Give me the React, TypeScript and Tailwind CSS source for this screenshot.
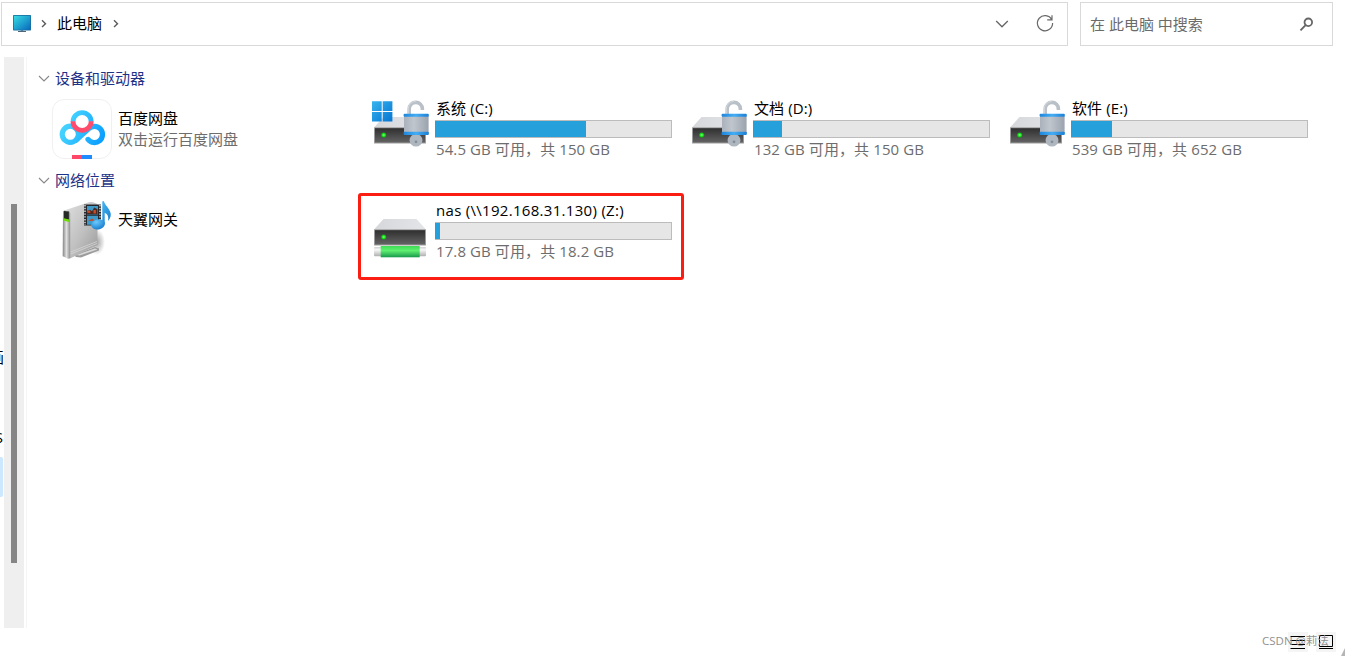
import type { ReactNode } from 'react'

type Drive = {
  name: string
  detail: string
  used: number
  icon: ReactNode
  nameClass?: string
}

function DriveBox() {
  return (
    <>
      <defs>
        <linearGradient id="driveFront" x1="0" y1="0" x2="0" y2="1">
          <stop offset="0" stopColor="#2f2f2f" />
          <stop offset="1" stopColor="#636363" />
        </linearGradient>
        <linearGradient id="driveTop" x1="0" y1="0" x2="1" y2="0">
          <stop offset="0" stopColor="#d6d7da" />
          <stop offset="1" stopColor="#e4e5e9" />
        </linearGradient>
        <radialGradient id="led">
          <stop offset="0" stopColor="#8dff8d" />
          <stop offset="0.6" stopColor="#18e018" />
          <stop offset="1" stopColor="#0fa015" />
        </radialGradient>
      </defs>
      <path d="M13.5 19h33L56 29.5H4z" fill="url(#driveTop)" />
      <rect x="4" y="29.3" width="52" height="16.2" rx="0.6" fill="#9b9b9b" />
      <rect x="5" y="30.2" width="50" height="14.3" fill="url(#driveFront)" />
      <circle cx="13.7" cy="37" r="2.6" fill="url(#led)" />
    </>
  )
}

function Padlock() {
  return (
    <>
      <defs>
        <linearGradient id="lockBody" x1="0" y1="0" x2="1" y2="0">
          <stop offset="0" stopColor="#aab1bb" />
          <stop offset="0.4" stopColor="#c0c6cd" />
          <stop offset="1" stopColor="#9aa3ae" />
        </linearGradient>
        <linearGradient id="lockBand" x1="0" y1="0" x2="1" y2="0">
          <stop offset="0" stopColor="#1c86dd" />
          <stop offset="0.5" stopColor="#45adf3" />
          <stop offset="1" stopColor="#1c7fd6" />
        </linearGradient>
      </defs>
      <path d="M39.2 17V11a6.6 6.6 0 0 1 13.2 0v1" fill="none" stroke="#b9c0c8" strokeWidth="3.6" />
      <path d="M38.2 16V11a7.6 7.6 0 0 1 7.6-7.6" fill="none" stroke="#d5d9de" strokeWidth="1" />
      <circle cx="46" cy="42.2" r="6.4" fill="#aeb6bf" />
      <rect x="34" y="18" width="24.6" height="17.5" fill="url(#lockBody)" />
      <rect x="33.6" y="15.8" width="25.2" height="3" rx="1" fill="url(#lockBand)" />
      <rect x="33.6" y="33.8" width="25.2" height="3.2" rx="1" fill="url(#lockBand)" />
      <circle cx="46" cy="43.8" r="1.4" fill="#858e98" />
    </>
  )
}

function LocalDriveIcon({ system = false }: { system?: boolean }) {
  return (
    <svg className="size-[60px] shrink-0" viewBox="0 0 60 60">
      <DriveBox />
      {system && (
        <>
          <defs>
            <linearGradient id="winLogo" x1="0" y1="0" x2="1" y2="1">
              <stop offset="0" stopColor="#35b4ee" />
              <stop offset="1" stopColor="#0675d3" />
            </linearGradient>
          </defs>
          <path d="M2 3.3h9.7V13H2zm10.7 0h9.7V13h-9.7zM2 14h9.7v9.6H2zm10.7 0h9.7v9.6h-9.7z" fill="url(#winLogo)" />
        </>
      )}
      <Padlock />
    </svg>
  )
}

function NetworkDriveIcon() {
  return (
    <svg className="size-[60px] shrink-0" viewBox="0 0 60 60">
      <defs>
        <linearGradient id="pipe" x1="0" y1="0" x2="0" y2="1">
          <stop offset="0" stopColor="#cfcfcf" />
          <stop offset="0.3" stopColor="#f8f8f8" />
          <stop offset="1" stopColor="#aeaeae" />
        </linearGradient>
        <linearGradient id="pipeGreen" x1="0" y1="0" x2="0" y2="1">
          <stop offset="0" stopColor="#3fdc55" />
          <stop offset="0.4" stopColor="#5ff071" />
          <stop offset="1" stopColor="#17984a" />
        </linearGradient>
      </defs>
      <DriveBox />
      <rect x="4" y="47" width="52" height="9.3" rx="1" fill="url(#pipe)" />
      <rect x="10.7" y="46" width="39" height="11.3" fill="url(#pipeGreen)" />
    </svg>
  )
}

function NetdiskIcon() {
  return (
    <svg className="size-[60px] shrink-0" viewBox="0 0 60 60" fill="none">
      <defs>
        <linearGradient id="cloud" gradientUnits="userSpaceOnUse" x1="8" y1="20" x2="53" y2="42">
          <stop offset="0" stopColor="#4ddcff" />
          <stop offset="0.5" stopColor="#2dbcff" />
          <stop offset="1" stopColor="#069bff" />
        </linearGradient>
      </defs>
      <rect x="0.5" y="0.5" width="59" height="59" rx="11.5" fill="#fff" stroke="#f0f0f0" />
      <circle cx="18.3" cy="35.3" r="8.1" stroke="url(#cloud)" strokeWidth="5.2" />
      <path d="M24 41.2 36.8 29.6A8.1 8.1 0 1 1 36 40.4" stroke="url(#cloud)" strokeWidth="5.2" strokeLinecap="round" />
      <path d="M21 22.7a9.1 9.1 0 0 1 18.2 0" stroke="url(#cloud)" strokeWidth="4.8" />
      <path d="M21 22.2a9.1 9.1 0 0 0 18.2 0" stroke="#ff4c6c" strokeWidth="4.8" />
      <path d="M20 56h10v4H20z" fill="#ff4769" />
      <path d="M30 56h10v4H30z" fill="#1e8bff" />
    </svg>
  )
}

function MediaServerIcon() {
  return (
    <svg className="h-[64px] w-[60px] shrink-0" viewBox="0 0 60 64">
      <defs>
        <linearGradient id="server" x1="0" y1="0" x2="1" y2="1">
          <stop offset="0" stopColor="#e0e0e0" />
          <stop offset="0.55" stopColor="#c0c0c0" />
          <stop offset="1" stopColor="#989898" />
        </linearGradient>
        <linearGradient id="serverSide" x1="0" y1="0" x2="1" y2="0">
          <stop offset="0" stopColor="#858585" />
          <stop offset="0.5" stopColor="#e0e0e0" />
          <stop offset="1" stopColor="#8f8f8f" />
        </linearGradient>
        <linearGradient id="note" x1="0" y1="0" x2="0.6" y2="1">
          <stop offset="0" stopColor="#45b5f0" />
          <stop offset="1" stopColor="#1b86d4" />
        </linearGradient>
        <radialGradient id="noteHead" cx="0.4" cy="0.25" r="0.8">
          <stop offset="0" stopColor="#6cc9fa" />
          <stop offset="1" stopColor="#1279cc" />
        </radialGradient>
        <radialGradient id="serverShadow">
          <stop offset="0" stopColor="#000" stopOpacity="0.35" />
          <stop offset="1" stopColor="#000" stopOpacity="0" />
        </radialGradient>
      </defs>
      <ellipse cx="41" cy="44" rx="8" ry="13" fill="url(#serverShadow)" />
      <path d="M18 57 39 49l4 1.500v2L25 59.500l-5-.5z" fill="#9c9c9c" />
      <path d="m20 57 19-6.500 2.500 1-18 6z" fill="#d8d8d8" />
      <path d="M8 12.600 33 4.300q2-.6 4 0l4.500 1.700V47L14 60.600z" fill="url(#server)" />
      <path d="M14.500 54 41 43.500M14.500 56 41 45.500" stroke="#dadada" strokeWidth="0.7" />
      <path d="m7 13.500 1.200-1 5 .6 1 2.400v44q-.3 1.600-2 1.200L6.700 58.300z" fill="url(#serverSide)" />
      <path d="m8 13 4.900.6v8.500L8 21z" fill="#252a27" />
      <path d="m8 20.200 5 1.200V24L8 22.700z" fill="#70dd0b" />
      <path d="M28 6.500h17v21H28z" fill="#26282c" />
      <path d="M29 7v20M44 7v20" stroke="#e2e6e8" strokeWidth="1.400" strokeDasharray="1.400 1.400" />
      <path d="M31 8h11v8.500H31zM31 17.800h11v9H31z" fill="#3d9ac9" />
      <path d="m31 13 3-1.200 2 1.400 2.200-3.600 3.300 1.600v5H31z" fill="#492b24" />
      <path d="m31 13.200 2.500-1 1.500 2.400-3.500.5zM37.500 12h2.400v3.400h-2.400zM32 23l4-2.500 3 2.200z" fill="#c94c29" />
      <path
        d="M46.300 3.500q1.300-1 1.800.3c.9 3.200 4.300 5.500 6.100 10 1.200 3 .7 6.200-2.200 9.200.9-4.100-.2-7-3.300-8.300V26h-2.400z"
        fill="url(#note)"
      />
      <ellipse cx="42" cy="26.400" rx="7" ry="5.100" transform="rotate(-10 42 26.400)" fill="url(#noteHead)" />
    </svg>
  )
}

function MonitorIcon() {
  return (
    <svg className="h-[18px] w-5" viewBox="0 0 20 18">
      <defs>
        <linearGradient id="screen" x1="0" y1="0" x2="1" y2="1">
          <stop offset="0" stopColor="#37dce3" />
          <stop offset="1" stopColor="#0869bd" />
        </linearGradient>
      </defs>
      <path d="M8.700 15h2.600v1.500H8.700z" fill="#8a98a3" />
      <path d="M6 16h8v1H6z" fill="#4e6679" />
      <rect x="1" y="0" width="18" height="15.500" rx="0.7" fill="#176e9e" />
      <rect x="1.800" y="0.800" width="16.400" height="13.900" fill="url(#screen)" />
    </svg>
  )
}

function Crumb() {
  return (
    <svg className="h-3 w-2" viewBox="0 0 8 12" fill="none" stroke="#5c5c5c" strokeWidth="1.400">
      <path d="M2 2.300 5.500 5.700 2 9.100" />
    </svg>
  )
}

function AddressBar() {
  return (
    <div className="flex gap-3 pt-0.5 pl-px">
      <div className="flex h-11 w-[1067px] items-center border border-[#d9d9d9] pl-[10px]">
        <MonitorIcon />
        <span className="ml-[8px] flex">
          <Crumb />
        </span>
        <span className="-mt-[3px] ml-[9px] w-[45px] text-black">此电脑</span>
        <span className="ml-[10px] flex">
          <Crumb />
        </span>
        <svg className="-mt-px ml-[874px] h-4 w-4" viewBox="0 0 16 16" fill="none" stroke="#666" strokeWidth="1.300">
          <path d="m2.200 5 5.800 5.800L13.800 5" />
        </svg>
        <svg className="-mt-0.5 ml-[25px] h-5 w-5" viewBox="0 0 20 20" fill="none" stroke="#6a6a6a" strokeWidth="1.200">
          <path d="M16.700 6.600A7.600 7.600 0 1 0 17.600 10M17 2.200v4.600h-4.800" />
        </svg>
      </div>
      <div className="flex h-11 w-[253px] items-center border border-[#d9d9d9] pl-[9px]">
        <span className="w-[120px] whitespace-nowrap text-[#6b6b6b]">在 此电脑 中搜索</span>
        <svg className="ml-[89px] h-4 w-4" viewBox="0 0 16 16" fill="none" stroke="#666">
          <circle cx="9.300" cy="6.300" r="3.800" strokeWidth="1.800" />
          <path d="M6.600 9.200 1.500 14.400" strokeWidth="1.900" />
        </svg>
      </div>
    </div>
  )
}

// What is left visible of the navigation pane
function NavPane() {
  return (
    <>
      <div className="relative w-1 shrink-0 overflow-hidden">
        <span className="absolute top-[290px] right-0 text-black">画</span>
        <span className="absolute top-[370px] right-px text-black">S</span>
        <div className="absolute top-[400px] left-0 h-10 w-[3px] rounded-r-xs bg-[#cce8ff]" />
      </div>
      <div className="w-5 shrink-0 bg-[#efefef] pt-[147px] pl-[7px]">
        <div className="h-[359px] w-1.5 bg-[#868686]" />
      </div>
      <div className="ml-0.5 w-px shrink-0 bg-[#f5f5f5]" />
    </>
  )
}

function SectionHeader({ title }: { title: string }) {
  return (
    <div className="flex h-5 items-center">
      <svg className="mr-[5px] h-3 w-3" viewBox="0 0 12 12" fill="none" stroke="#888" strokeWidth="1.100">
        <path d="m1 4 5 5 5-5" />
      </svg>
      <span className="text-[#1e3287]">{title}</span>
    </div>
  )
}

function DriveTile({ name, detail, used, icon, nameClass = 'tracking-[0.1px]' }: Drive) {
  return (
    <div className="flex h-[62px]">
      {icon}
      <div className="ml-[5px] w-[237px]">
        <div className={`h-[22px] pl-px leading-[21px] whitespace-nowrap text-black ${nameClass}`}>{name}</div>
        <div className="h-[18px] border-y border-r border-[#bcbcbc] bg-[#e6e6e6]">
          <div className="h-full bg-[#26a0da]" style={{ width: used }} />
        </div>
        <div className="pl-px leading-[22px] tracking-[0.1px] whitespace-nowrap text-[#6d6d6d]">{detail}</div>
      </div>
    </div>
  )
}

const drives: Drive[] = [
  { name: '系统 (C:)', detail: '54.5 GB 可用，共 150 GB', used: 151, icon: <LocalDriveIcon system /> },
  { name: '文档 (D:)', detail: '132 GB 可用，共 150 GB', used: 29, icon: <LocalDriveIcon /> },
  { name: '软件 (E:)', detail: '539 GB 可用，共 652 GB', used: 41, icon: <LocalDriveIcon /> },
]

function StatusBar() {
  return (
    <div className="relative h-7">
      <div className="flex justify-end gap-2 pt-1 pr-[9px]">
        <svg className="h-5 w-5 bg-[#f5f5f5]" viewBox="0 0 20 20" stroke="#000" strokeWidth="1">
          <path d="M2.500 4.500h14.500M2.500 8.500h14.500M2.500 12.500h14.500M2.500 16.500h14.500" />
        </svg>
        <svg className="h-5 w-5 bg-[#f5f5f5]" viewBox="0 0 20 20" fill="none" stroke="#000" strokeWidth="1">
          <path d="M3.500 3.500h13v11h-13zM3 16.500h14" />
        </svg>
      </div>
      <span className="absolute top-[5px] left-[1262px] text-[11.5px] leading-4 whitespace-nowrap text-[#909090]">
        CSDN @莉法
      </span>
      <svg className="absolute right-0 bottom-0 h-2 w-1" viewBox="0 0 4 8">
        <path d="M4 0v8H0z" fill="#b5b5b5" />
      </svg>
    </div>
  )
}

export default function App() {
  return (
    <div
      lang="zh-CN"
      className="flex h-[656px] w-[1345px] flex-col overflow-hidden bg-white font-['Open_Sans','Noto_Sans_CJK_SC',sans-serif] text-[15px] leading-5"
    >
      <AddressBar />
      <div className="mt-[11px] flex h-[571px]">
        <NavPane />
        <main className="pt-[11px] pl-[11px]">
          <SectionHeader title="设备和驱动器" />
          <div className="mt-[10px] mb-[10px] ml-[14px] grid grid-cols-[318px_318px_318px_302px]">
            <div className="flex h-[62px] pt-px">
              <NetdiskIcon />
              <div className="ml-[6px] pt-[9px] leading-[21px]">
                <div className="text-black">百度网盘</div>
                <div className="text-[#6d6d6d]">双击运行百度网盘</div>
              </div>
            </div>
            {drives.map((drive) => (
              <DriveTile key={drive.name} {...drive} />
            ))}
          </div>
          <SectionHeader title="网络位置" />
          <div className="mt-[10px] ml-[14px] grid grid-cols-[318px_318px]">
            <div className="flex h-[62px] pl-1">
              <span className="-mt-0.5">
                <MediaServerIcon />
              </span>
              <span className="ml-0.5 pt-[9px] text-black">天翼网关</span>
            </div>
            <div className="relative">
              <DriveTile
                name="nas (\\192.168.31.130) (Z:)"
                nameClass="tracking-[0.3px]"
                detail="17.8 GB 可用，共 18.2 GB"
                used={5}
                icon={<NetworkDriveIcon />}
              />
              <div className="absolute -top-[7px] -left-3 h-[87px] w-[326px] rounded-[3px] border-3 border-[#fb1d12]" />
            </div>
          </div>
        </main>
      </div>
      <StatusBar />
    </div>
  )
}
